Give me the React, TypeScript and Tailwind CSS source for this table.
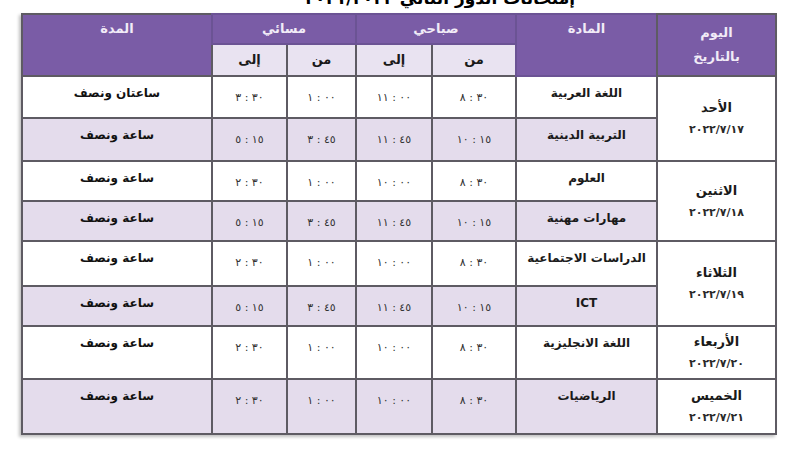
const rows = [
  { day: "الأحد", date: "٢٠٢٢/٧/١٧", span: 2, subject: "اللغة العربية", t: ["٨ : ٣٠", "١١ : ٠٠", "١ : ٠٠", "٣ : ٣٠"], dur: "ساعتان ونصف", h: "h-[42px]" },
  { subject: "التربية الدينية", t: ["١٠ : ١٥", "١١ : ٤٥", "٣ : ٤٥", "٥ : ١٥"], dur: "ساعة ونصف", h: "h-[43px]" },
  { day: "الاثنين", date: "٢٠٢٢/٧/١٨", span: 2, subject: "العلوم", t: ["٨ : ٣٠", "١٠ : ٠٠", "١ : ٠٠", "٢ : ٣٠"], dur: "ساعة ونصف", h: "h-[40px]" },
  { subject: "مهارات مهنية", t: ["١٠ : ١٥", "١١ : ٤٥", "٣ : ٤٥", "٥ : ١٥"], dur: "ساعة ونصف", h: "h-[40px]" },
  { day: "الثلاثاء", date: "٢٠٢٢/٧/١٩", span: 2, subject: "الدراسات الاجتماعية", t: ["٨ : ٣٠", "١٠ : ٠٠", "١ : ٠٠", "٢ : ٣٠"], dur: "ساعة ونصف", h: "h-[45px]" },
  { subject: "ICT", t: ["١٠ : ١٥", "١١ : ٤٥", "٣ : ٤٥", "٥ : ١٥"], dur: "ساعة ونصف", h: "h-[40px]" },
  { day: "الأربعاء", date: "٢٠٢٢/٧/٢٠", span: 1, subject: "اللغة الانجليزية", t: ["٨ : ٣٠", "١٠ : ٠٠", "١ : ٠٠", "٢ : ٣٠"], dur: "ساعة ونصف", h: "h-[53px]" },
  { day: "الخميس", date: "٢٠٢٢/٧/٢١", span: 1, subject: "الرياضيات", t: ["٨ : ٣٠", "١٠ : ٠٠", "١ : ٠٠", "٢ : ٣٠"], dur: "ساعة ونصف", h: "h-[55px]" },
];

const cell = "border-2 border-[#5e5b63] align-top pt-[7px] text-center";

export default function App() {
  return (
    <div className="h-[450px] w-[800px] overflow-hidden bg-white font-['DejaVu_Sans',sans-serif]" dir="rtl">
      <div className="-mt-[13px] flex h-[22px] items-end justify-start pr-[225px]">
        <span className="text-[17px] font-bold leading-[22px] text-black">
          إمتحانات الدور الثاني <bdo dir="ltr">٢٠٢١/٢٠٢٢</bdo>
        </span>
      </div>

      <div className="mt-[4px] pr-[23px]">
        <table className="w-[754px] table-fixed border-collapse shadow-[-2px_2px_3px_rgba(0,0,0,0.25)]">
          <colgroup>
            <col className="w-[119px]" />
            <col className="w-[141px]" />
            <col className="w-[84px]" />
            <col className="w-[76px]" />
            <col className="w-[69px]" />
            <col className="w-[75px]" />
            <col className="w-[190px]" />
          </colgroup>
          <thead>
            <tr className="h-[30px] bg-[#7a5ca6] text-[13px] font-bold text-[#f1ebf7]">
              <th rowSpan={2} className="border-2 border-[#5e5b63] align-middle leading-[24px]">
                اليوم
                <br />
                بالتاريخ
              </th>
              <th rowSpan={2} className="border-2 border-[#6b5394] pt-[4px] align-top">المادة</th>
              <th colSpan={2} className="border-2 border-[#6b5394] align-middle">صباحي</th>
              <th colSpan={2} className="border-2 border-[#6b5394] align-middle">مسائي</th>
              <th rowSpan={2} className="border-2 border-[#5e5b63] pt-[4px] align-top">المدة</th>
            </tr>
            <tr className="h-[32px] text-[13px] font-bold text-[#1a1a1a]">
              <th className="border-2 border-[#5e5b63] bg-[#e9e3f1]">من</th>
              <th className="border-2 border-[#5e5b63] bg-[#e9e3f1]">إلى</th>
              <th className="border-2 border-[#5e5b63] bg-[#e9e3f1]">من</th>
              <th className="border-2 border-[#5e5b63] bg-[#e9e3f1]">إلى</th>
            </tr>
          </thead>
          <tbody>
            {rows.map((r, i) => {
              const shade = i % 2 === 1 ? "bg-[#e4dcec]" : "bg-white";
              return (
                <tr key={i} className={r.h}>
                  {r.day && (
                    <td rowSpan={r.span} className="border-2 border-[#5e5b63] bg-white text-center align-middle">
                      <div className="text-[13px] font-bold leading-[20px] text-[#1a1a1a]">{r.day}</div>
                      <div dir="ltr" className="mt-[4px] text-[11px] font-bold tracking-[2px] text-[#2a2a2a]">
                        {r.date}
                      </div>
                    </td>
                  )}
                  <td className={`${cell} ${shade} text-[12px] font-bold text-[#1a1a1a]`}>{r.subject}</td>
                  {r.t.map((v, j) => (
                    <td key={j} className={`${cell} ${shade}`}>
                      <bdo dir="ltr" className="text-[11px] tracking-[1px] text-[#333]">
                        {v}
                      </bdo>
                    </td>
                  ))}
                  <td className={`${cell} ${shade} text-[12px] font-bold text-[#111]`}>{r.dur}</td>
                </tr>
              );
            })}
          </tbody>
        </table>
      </div>
    </div>
  );
}
